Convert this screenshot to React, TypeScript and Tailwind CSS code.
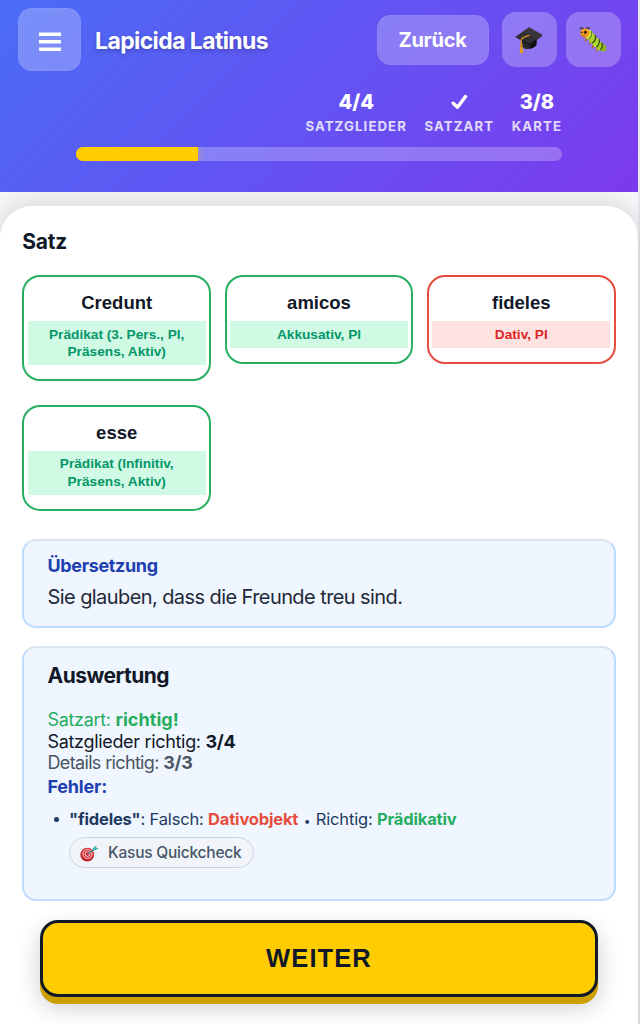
import type { ReactNode } from 'react'

type WordStatus = 'correct' | 'wrong'

interface SentenceWord {
  text: string
  detail: string[]
  status: WordStatus
}

const WORDS: SentenceWord[] = [
  { text: 'Credunt', detail: ['Prädikat (3. Pers., Pl,', 'Präsens, Aktiv)'], status: 'correct' },
  { text: 'amicos', detail: ['Akkusativ, Pl'], status: 'correct' },
  { text: 'fideles', detail: ['Dativ, Pl'], status: 'wrong' },
  { text: 'esse', detail: ['Prädikat (Infinitiv,', 'Präsens, Aktiv)'], status: 'correct' },
]

const CARD_BORDER: Record<WordStatus, string> = {
  correct: 'border-[#27ae60]',
  wrong: 'border-[#e74c3c]',
}

const CARD_DETAIL: Record<WordStatus, string> = {
  correct: 'bg-[#d1fae5] text-[#059669]',
  wrong: 'bg-[#fee2e2] text-[#dc2626]',
}

const PANEL_CLASS =
  'rounded-[14px] border-2 border-[#bfdbfe] border-t-[#dbe3ee] bg-[#eff6ff] px-[23.2px]'

function GraduationCapIcon() {
  return (
    <svg width="28" height="28" viewBox="0 0 28 28" aria-hidden>
      <path d="M7 13v6.500c0 2.500 4 4.200 8 3.200 3.400-.8 6.500-2.500 6.500-5V11z" fill="#29292b" />
      <path d="M15 17.500l6.500-3.800v4c0 2.300-3 4-6.500 5z" fill="#101012" />
      <path d="M.8 10.500 14 1.200l13.200 7.600L14.700 19z" fill="#303033" />
      <path d="M.8 10.500 14.700 18l12.500-9.200v.9L14.700 19.200.8 11.300z" fill="#111113" />
      <path d="M14 1.200l13.200 7.600-6 4.400L8 5.500z" fill="#3e3e41" opacity=".55" />
      <path d="M14.500 9.200C11 10.200 6.500 11.500 6.200 14l.2 6" fill="none" stroke="#d18b20" strokeWidth="1.500" />
      <path d="M5.300 18.500h2.200l.8 8.200c-1.300.7-2.700.7-3.600 0z" fill="#e09a2b" />
      <path d="M5.200 20.300h2.500" stroke="#9b6110" strokeWidth=".8" />
    </svg>
  )
}

function CaterpillarIcon() {
  return (
    <svg width="28" height="28" viewBox="0 0 28 28" aria-hidden>
      <path d="M8 11l-1.500 3.500M12 15l-1.500 3M15 18l-1.500 3.500M19 21l-1.500 3.500" stroke="#b8671c" strokeWidth="1.600" strokeLinecap="round" />
      <path d="M5 3.500C3.500 1.500 2.200 1.800 1.200 2.500M7 3c.8-1.700 2.500-1.800 3.500-.5" fill="none" stroke="#40372c" strokeWidth="1.300" strokeLinecap="round" />
      <ellipse cx="24" cy="22" rx="3.300" ry="3.500" fill="#8fb51c" />
      <ellipse cx="20.800" cy="20" rx="3.700" ry="4.300" fill="#a6ce24" />
      <path d="M22.800 16.800c1 2.200.3 5-1.300 7" fill="none" stroke="#36500f" strokeWidth="1.400" />
      <ellipse cx="17.300" cy="16.700" rx="4" ry="4.700" fill="#b5da31" />
      <path d="M20 13.300c1 2.700-.5 6-2.500 8" fill="none" stroke="#36500f" strokeWidth="1.400" />
      <ellipse cx="13.700" cy="12.700" rx="4" ry="4.800" fill="#a9d12b" />
      <path d="M16.300 9c1 3-.6 6.300-3 8.300" fill="none" stroke="#36500f" strokeWidth="1.400" />
      <ellipse cx="10" cy="8.700" rx="4" ry="5" fill="#c0e33c" />
      <path d="M12.300 5.200c1.200 3-.3 6.300-2.800 8.300" fill="none" stroke="#557a18" strokeWidth="1.100" />
      <ellipse cx="6" cy="7" rx="4.600" ry="4.500" fill="#f39a1e" />
      <circle cx="6.300" cy="6.300" r="1.500" fill="#2a1a0c" />
      <circle cx="2.600" cy="6.500" r=".8" fill="#2a1a0c" />
      <path d="M3 9.500c1 .8 2 .8 3 .3" fill="none" stroke="#a4470f" strokeWidth=".9" />
    </svg>
  )
}

function TargetIcon() {
  return (
    <svg width="19" height="17" viewBox="0 0 19 17" className="mt-0.5" aria-hidden>
      <ellipse cx="7.200" cy="9.700" rx="6.900" ry="6.700" fill="#b3202a" />
      <circle cx="7.500" cy="8.900" r="6.200" fill="#dc2f39" />
      <circle cx="7.500" cy="8.900" r="4.500" fill="none" stroke="#f6dede" strokeWidth=".9" />
      <circle cx="7.500" cy="8.900" r="2.500" fill="none" stroke="#f6dede" strokeWidth=".9" />
      <path d="M7.500 8.900l7-5" stroke="#3b8f99" strokeWidth="1.200" />
      <path d="M12.700 3.400 16.200.3l.2 2.400 2.400.9-3.900 2-2-.2z" fill="#45b3b5" />
    </svg>
  )
}

function Stat({ value, label }: { value: ReactNode; label: string }) {
  return (
    <div className="flex flex-col items-center">
      <div className="flex h-6 items-center text-[20px] leading-6 font-extrabold text-white">{value}</div>
      <div className="text-[13.200px] leading-6 font-bold tracking-[1.100px] text-white/80">{label}</div>
    </div>
  )
}

function Header() {
  return (
    <header className="relative z-10 h-48 bg-[linear-gradient(135deg,#4a6cf7_0%,#7c3aed_100%)] pt-2">
      <div className="flex h-[63px] items-center pr-[17.500px] pl-[18px]">
        <button
          type="button"
          aria-label="Menü"
          className="flex size-[63px] items-center justify-center rounded-[14px] border border-white/5 bg-white/25"
        >
          <svg width="22" height="20" viewBox="0 0 22 20" className="mt-1" aria-hidden>
            <path d="M0 2.300h22M0 9.800h22M0 17.300h22" stroke="white" strokeWidth="3.600" />
          </svg>
        </button>
        <h1 className="ml-3.5 pt-0.5 text-[23px] leading-7 font-bold tracking-[-0.6px] whitespace-nowrap text-white [text-shadow:0_2px_4px_rgba(0,0,0,0.25)]">
          Lapicida Latinus
        </h1>
        <button
          type="button"
          className="ml-auto h-[50px] w-[112px] rounded-[14px] border border-white/5 bg-white/25 text-[20px] font-bold tracking-[-0.25px] text-white"
        >
          Zurück
        </button>
        <button
          type="button"
          aria-label="Lernen"
          className="ml-[13px] flex size-[55px] items-center justify-center rounded-[14px] bg-white/25"
        >
          <GraduationCapIcon />
        </button>
        <button
          type="button"
          aria-label="Fehler melden"
          className="ml-[9px] flex size-[55px] items-center justify-center rounded-[14px] bg-white/25"
        >
          <CaterpillarIcon />
        </button>
      </div>

      <div className="mt-[19px] flex justify-end gap-[17.500px] pr-[76px]">
        <Stat value="4/4" label="SATZGLIEDER" />
        <Stat
          value={
            <svg width="17" height="16" viewBox="0 0 17 16" aria-hidden>
              <path d="M2.200 9.200 6.500 13.200 14.500 2.500" fill="none" stroke="white" strokeWidth="3.400" strokeLinecap="round" strokeLinejoin="round" />
            </svg>
          }
          label="SATZART"
        />
        <Stat value="3/8" label="KARTE" />
      </div>

      <div className="mx-[76px] mt-[9px] h-3.5 overflow-hidden rounded-full bg-white/25">
        <div className="h-full w-1/4 bg-[#ffcc00] shadow-[0_0_8px_rgba(255,204,0,0.4)]" />
      </div>
    </header>
  )
}

function WordCard({ word }: { word: SentenceWord }) {
  return (
    <div className={`rounded-[18px] border-2 bg-white px-[3.500px] py-3.5 text-center font-bold ${CARD_BORDER[word.status]}`}>
      <div className="text-[18.500px] leading-6 text-[#111827]">{word.text}</div>
      <div className={`mt-1.5 py-[4.500px] text-[13.700px] leading-[17.600px] ${CARD_DETAIL[word.status]}`}>
        {word.detail.map((line) => (
          <div key={line}>{line}</div>
        ))}
      </div>
    </div>
  )
}

function Evaluation() {
  return (
    <section className={`${PANEL_CLASS} mt-[18.500px] h-[255px] pt-3.5`}>
      <h2 className="text-[21px] leading-7 font-bold tracking-[-0.5px] text-[#111827]">Auswertung</h2>
      <div className="mt-[19px] text-[18px] leading-[21.200px] tracking-[-0.32px]">
        <p className="text-[#27ae60]">
          Satzart: <strong className="tracking-[0.05px]">richtig!</strong>
        </p>
        <p className="text-[#111827]">
          Satzglieder richtig: <strong>3/4</strong>
        </p>
        <p className="tracking-[-0.65px] text-[#4b5563]">
          Details richtig: <strong className="tracking-[-0.3px]">3/3</strong>
        </p>
      </div>
      <h3 className="mt-0.5 text-[18px] leading-6 font-bold tracking-[-0.2px] text-[#1e40af]">Fehler:</h3>
      <ul className="mt-2 text-[16.500px] leading-6 tracking-[-0.17px] text-[#1e3a5f]">
        <li className="flex">
          <span className="flex h-6 w-[21.500px] items-center pt-0.5 pl-[6.500px]">
            <span className="size-[5px] rounded-full bg-[#1e3a5f]" />
          </span>
          <div>
            <p className="h-6 whitespace-nowrap">
              <strong>"fideles"</strong>: Falsch: <strong className="text-[#e74c3c]">Dativobjekt</strong>{' '}
              <span className="px-px text-[12px] leading-none">•</span> Richtig:{' '}
              <strong className="text-[#27ae60]">Prädikativ</strong>
            </p>
            <button
              type="button"
              className="mt-1.5 flex h-[31px] w-[185px] items-center rounded-full border border-[#cbd5e1] bg-[#f1f5f9] pl-2.5 text-[15.500px] font-medium tracking-[-0.22px] whitespace-nowrap text-[#475569]"
            >
              <TargetIcon />
              <span className="ml-[9px] pt-px">Kasus Quickcheck</span>
            </button>
          </div>
        </li>
      </ul>
    </section>
  )
}

export default function App() {
  return (
    <div className="h-[1024px] w-[640px] overflow-hidden bg-[#e8e8f0] pr-[2px] font-['Inter',sans-serif]">
      <div className="h-full bg-[#f8f9fa]">
        <Header />
        <main className="mt-3.5 h-[900px] rounded-t-[32px] bg-white px-[22.300px] pt-[22px] shadow-[0_-4px_30px_rgba(0,0,0,0.15)]">
          <h2 className="text-[21px] leading-7 font-bold tracking-[-0.2px] text-[#111827]">Satz</h2>

          <div className="mt-[19px] grid grid-cols-3 items-start gap-x-[13.500px] gap-y-[23.500px] font-['Liberation_Sans',Arial,sans-serif]">
            {WORDS.map((word) => (
              <WordCard key={word.text} word={word} />
            ))}
          </div>

          <section className={`${PANEL_CLASS} mt-7 h-[89px] pt-[13px]`}>
            <h3 className="text-[18px] leading-6 font-bold tracking-[-0.35px] text-[#1e40af]">Übersetzung</h3>
            <p className="mt-[5px] text-[20px] leading-7 tracking-[-0.58px] text-[#1f2937]">
              Sie glauben, dass die Freunde treu sind.
            </p>
          </section>

          <Evaluation />

          <div className="mt-[18.500px] px-[18px]">
            <button
              type="button"
              className="h-[77px] w-full rounded-[18px] border-[3.500px] border-[#111827] bg-[#ffcc00] font-['Liberation_Sans',Arial,sans-serif] text-[25.500px] font-bold tracking-[1.100px] text-[#111827] shadow-[0_7px_0_#cc9f00,0_10px_24px_rgba(0,0,0,0.2)]"
            >
              WEITER
            </button>
          </div>
        </main>
      </div>
    </div>
  )
}
